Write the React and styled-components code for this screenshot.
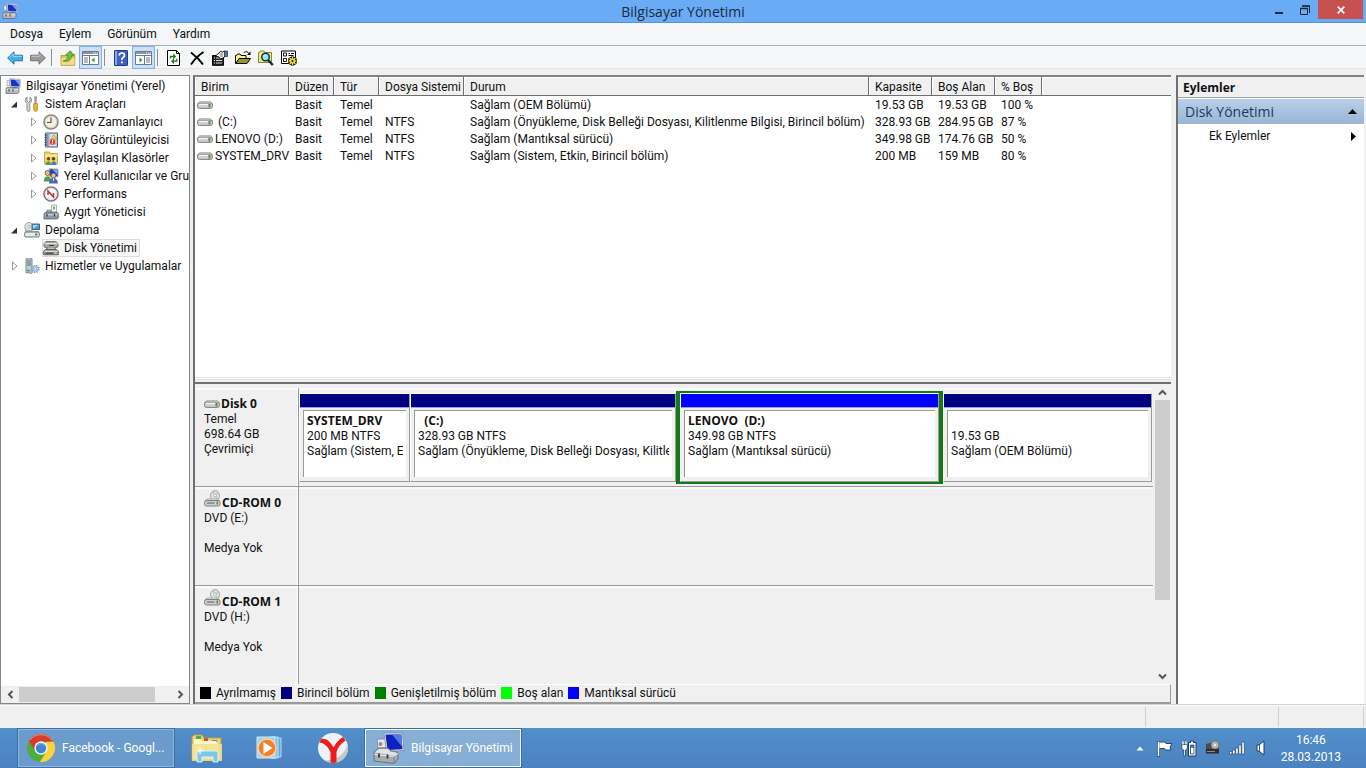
import React from "react"
import styled, { createGlobalStyle, css } from "styled-components"

const headingFont = `"Open Sans", "Noto Sans", sans-serif`

const GlobalStyle = createGlobalStyle`
  * {
    box-sizing: border-box;
  }
  body {
    margin: 0;
    font-family: Roboto, "Open Sans", sans-serif;
    font-size: 12px;
    line-height: 16px;
    color: #111;
    background: #f0f0f0;
  }
  button {
    font: inherit;
    color: inherit;
    border: 0;
    padding: 0;
    background: none;
  }
  svg {
    display: block;
    flex: none;
  }
`

const Desktop = styled.div`
  display: flex;
  flex-direction: column;
  height: 100vh;
  overflow: hidden;
`

/* ---------- title bar ---------- */

const TitleBar = styled.header`
  display: grid;
  grid-template-columns: 1fr auto 1fr;
  height: 23px;
  flex: none;
  background: #6aabf6;
  border-bottom: 1px solid #5a92cf;
`
const TitleIcon = styled.div`
  padding: 3px 0 0 2px;
`
const Title = styled.h1`
  margin: 0;
  font-family: ${headingFont};
  font-size: 14px;
  font-weight: 400;
  line-height: 23px;
  color: #1c2b3c;
`
const WindowButtons = styled.div`
  display: flex;
  justify-content: flex-end;
  align-items: flex-start;
  padding-right: 3px;
`
const WindowButton = styled.button`
  display: flex;
  align-items: center;
  justify-content: center;
  width: ${(p) => (p.$close ? "45px" : "26px")};
  height: 19px;
  color: ${(p) => (p.$close ? "#fff" : "#1c2b3c")};
  background: ${(p) => (p.$close ? "#c75050" : "transparent")};
`

/* ---------- menu and toolbar ---------- */

const MenuBar = styled.nav`
  display: flex;
  flex: none;
  gap: 16px;
  height: 23px;
  padding-left: 10px;
  background: #f4f6f8;
  border-bottom: 1px solid #adb0b3;
`
const MenuButton = styled.button`
  line-height: 22px;
`
const Toolbar = styled.div`
  display: flex;
  flex: none;
  height: 23px;
  padding-left: 3px;
  background: #f4f6f8;
  border-bottom: 1px solid #e4e6e8;
`
const ToolButton = styled.button`
  display: flex;
  align-items: center;
  justify-content: center;
  width: 23px;
  height: 23px;
  border: 1px solid ${(p) => (p.$on ? "#7cb3e8" : "transparent")};
  background: ${(p) => (p.$on ? "#c9e0f7" : "transparent")};
`
const ToolSeparator = styled.span`
  width: 1px;
  height: 17px;
  margin: 3px 4px 0 2px;
  background: #8d8f92;
`

/* ---------- work area ---------- */

const WorkArea = styled.main`
  display: flex;
  flex: 1;
  min-height: 0;
  gap: 3px;
  padding: 6px 2px 0 0;
`
const TreePane = styled.aside`
  display: flex;
  flex-direction: column;
  width: 190px;
  flex: none;
  background: #fff;
  border: 1px solid #828790;
`
const TreeBody = styled.ul`
  flex: 1;
  margin: 0;
  padding: 1px 0 0;
  list-style: none;
  overflow: hidden;
`
const TreeRow = styled.li`
  display: flex;
  align-items: center;
  height: 18px;
  padding-left: ${(p) => [3, 8, 27][p.$level]}px;
  white-space: nowrap;
`
const Twisty = styled.span`
  width: ${(p) => (p.$root ? "0" : "14px")};
  flex: none;
`
const TreeLabel = styled.span`
  display: flex;
  align-items: center;
  gap: 5px;
  height: 18px;
  padding-right: 2px;
  border: 1px solid transparent;
  ${(p) =>
    p.$selected &&
    css`
      background: #f6f6f6;
      border-color: #dcdcdc;
    `}
`
const HScroll = styled.div`
  display: flex;
  align-items: center;
  height: 17px;
  flex: none;
  background: #f0f0f0;
`
const VScroll = styled.div`
  display: flex;
  flex-direction: column;
  align-items: center;
  width: 17px;
  flex: none;
  padding-right: 1px;
  background: #f0f0f0;
`
const ScrollButton = styled.button`
  display: flex;
  align-items: center;
  justify-content: center;
  width: 18px;
  height: 16px;
  flex: none;
  color: #555;
`
const HThumb = styled.div`
  height: 15px;
  flex: 0 0 136px;
  margin-right: auto;
  background: #cdcdcd;
`
const VThumb = styled.div`
  width: 15px;
  flex: 0 0 200px;
  margin-bottom: auto;
  background: #cdcdcd;
`

const CenterPane = styled.section`
  display: flex;
  flex-direction: column;
  flex: 1;
  min-width: 0;
  margin-right: 2px;
  border: solid #6d6f73;
  border-width: 2px 0 0 2px;
  border-top-color: #828282;
`
const VolumePane = styled.div`
  flex: 1;
  min-height: 0;
  overflow: hidden;
  background: #fff;
`
const VolumeTable = styled.table`
  width: 100%;
  table-layout: fixed;
  border-collapse: separate;
  border-spacing: 0;
  white-space: nowrap;
`
const ColumnHead = styled.th`
  width: ${(p) => (p.$width ? p.$width + "px" : "auto")};
  height: 19px;
  padding: 1px 0 0 6px;
  font-weight: 400;
  text-align: left;
  background: #f0f0f0;
  border-bottom: 1px solid #6e6e6e;
  border-right: ${(p) => (p.$width ? "1px solid #6e6e6e" : "0")};
  box-shadow: inset 1px 1px #fff;
`
const VolumeCell = styled.td`
  height: 17px;
  padding: 1px 0 0 6px;
  line-height: 16px;
`
const VolumeName = styled.div`
  display: flex;
  align-items: center;
  gap: 2px;
  margin-left: -4px;
  white-space: pre;
`
const Splitter = styled.div`
  height: 7px;
  flex: none;
  background: #f0f0f0;
  border-top: 1px solid #e3e3e3;
  border-bottom: 2px solid #6f6f6f;
  box-shadow: inset 0 1px #fff, inset 0 2px #dedede;
`
const DiskPane = styled.div`
  display: flex;
  flex: 0 0 300px;
  overflow: hidden;
  background: #f0f0f0;
`
const DiskRows = styled.div`
  flex: 1;
  min-width: 0;
  padding-top: 4px;
`
const DiskRow = styled.div`
  display: flex;
  height: 99px;
  margin-right: 1px;
  border-bottom: 1px solid #9a9a9a;
  box-shadow: inset 0 2px #fafafa;
`
const DiskLabel = styled.div`
  width: 104px;
  flex: none;
  padding: 8px 0 0 9px;
  line-height: 15px;
  border-right: 1px solid #9a9a9a;
  box-shadow: inset -1px 0 #fff;
`
const DiskName = styled.div`
  display: flex;
  align-items: flex-end;
  gap: 1px;
  height: 15px;
  font-family: ${headingFont};
  font-weight: 700;
  svg {
    margin-bottom: 3px;
  }
`
const DiskLine = styled.div`
  height: 15px;
  padding-top: 1px;
`
const PartitionStrip = styled.div`
  display: grid;
  grid-template-columns: ${(p) => p.$columns};
  flex: 1;
  min-width: 0;
  height: 93px;
  margin: 3px 1px 0 0;
`
const PartitionFrame = styled.div`
  min-width: 0;
  border: solid ${(p) => (p.$selected ? "#137a18" : "transparent")};
  border-width: ${(p) => (p.$selected ? "2px 4px" : "2px 0")};
`
const Partition = styled.div`
  display: flex;
  flex-direction: column;
  height: 89px;
  border: 1px solid #fff;
  border-right-color: #9a9a9a;
  border-bottom-color: #9a9a9a;
`
const PartitionBar = styled.div`
  height: 14px;
  flex: none;
  background: ${(p) => p.$color};
  border-bottom: 1px solid #9c9ce0;
`
const PartitionInfo = styled.div`
  flex: 1;
  margin: 2px 3px 4px;
  padding: 2px 0 0 3px;
  line-height: 15px;
  white-space: pre;
  background: #fff;
  border: solid #9a9a9a;
  border-width: 1px 0 0 1px;
  overflow: hidden;
`
const PartitionText = styled.div`
  height: 15px;
  padding-top: 1px;
  margin-right: 3px;
  overflow: hidden;
  ${(p) =>
    p.$strong &&
    css`
      padding-top: 0;
      font-family: ${headingFont};
      font-weight: 700;
    `}
`
const Legend = styled.div`
  display: flex;
  align-items: center;
  gap: 5px;
  height: 20px;
  flex: none;
  padding: 0 0 2px 5px;
  border: solid #9a9a9a;
  border-width: 1px 1px 2px 0;
  border-top-color: #fff;
`
const LegendItem = styled.span`
  display: flex;
  align-items: center;
  gap: 5px;
  white-space: nowrap;
  &::before {
    content: "";
    width: 11px;
    height: 12px;
    background: ${(p) => p.$color};
  }
`

const ActionsPane = styled.aside`
  width: 188px;
  flex: none;
  background: #fff;
  border: solid #6d6f73;
  border-width: 2px 0 0 2px;
  border-top-color: #828282;
`
const ActionsTitle = styled.h2`
  margin: 0;
  height: 21px;
  padding-left: 5px;
  font-family: ${headingFont};
  font-size: 12px;
  line-height: 21px;
  background: #f0f0f0;
  border-bottom: 1px solid #a0a0a0;
`
const ActionsHeading = styled.button`
  display: flex;
  align-items: center;
  justify-content: space-between;
  width: 100%;
  height: 25px;
  margin-top: 1px;
  padding: 0 7px;
  font-family: ${headingFont};
  font-size: 14px;
  color: #1e395b;
  background: linear-gradient(#b9cfe8, #9bb5d4);
`
const ActionsItem = styled.button`
  display: flex;
  align-items: center;
  justify-content: space-between;
  width: 100%;
  height: 24px;
  padding: 0 8px 0 31px;
`

const StatusBar = styled.footer`
  display: flex;
  justify-content: flex-end;
  height: 24px;
  flex: none;
  padding: 2px 2px 1px 0;
  border-top: 1px solid #d4d4d4;
  box-shadow: inset 0 1px #f8f8f8;
`
const StatusCell = styled.span`
  width: ${(p) => p.$width}px;
  border-right: 1px solid #d0d0d0;
`

/* ---------- taskbar ---------- */

const Taskbar = styled.div`
  display: flex;
  align-items: center;
  height: 40px;
  flex: none;
  padding: 0 25px 0 17px;
  background: linear-gradient(#528fcb, #4a82bf);
  color: #fff;
`
const TaskButton = styled.button`
  display: flex;
  align-items: center;
  gap: 6px;
  width: 158px;
  height: 40px;
  padding-left: 8px;
  white-space: nowrap;
  border: 1px solid #3a6ea5;
  background: ${(p) => (p.$active ? "#87aed5" : "#6b9bcc")};
  box-shadow: inset 0 0 0 1px ${(p) => (p.$active ? "#f2f7fc" : "#8fb6dd")};
`
const TaskShortcut = styled.button`
  display: flex;
  align-items: center;
  justify-content: center;
  width: 63px;
  height: 40px;
`
const Tray = styled.div`
  display: flex;
  align-items: center;
  gap: 8px;
  margin-left: auto;
`
const Clock = styled.time`
  margin-left: 4px;
  padding-top: 2px;
  line-height: 17px;
  text-align: center;
`

/* ---------- icons ---------- */

const Svg = ({ w = 16, h = 16, box, children }) => (
  <svg width={w} height={h} viewBox={box || `0 0 ${w} ${h}`} aria-hidden="true">
    {children}
  </svg>
)

const ComputerIcon = () => (
  <Svg>
    <path d="M2 2.500h2.500v5H2z" fill="#eceeef" stroke="#8a8f94" strokeWidth=".6" />
    <path d="M4.500.5l10.800.8v8.200L5.500 9z" fill="#d9dfe5" stroke="#95a0ab" strokeWidth=".6" />
    <path d="M5.600 1.600l8.800.6v6.200L6.300 8z" fill="#1a30c4" />
    <path d="M10 1.900l4.400.3v5z" fill="#7f9cf0" />
    <path d="M1 10.300l1.500-1h9.500l2 1v4l-1.500 1.200H1z" fill="#b4babd" stroke="#5c6266" strokeWidth=".7" />
    <path d="M1.400 11.800h12" stroke="#eef0f1" strokeWidth=".8" />
    <path d="M4 11v2.500M8 11v2.500" stroke="#3a3f42" />
    <path d="M7.500 9h4v1.300h-4z" fill="#6d7479" />
  </Svg>
)

const ComputerLargeIcon = () => (
  <Svg w={32} h={32}>
    <path d="M4 8l2-1h7v9H5z" fill="#e7eaec" stroke="#7c8287" strokeWidth=".8" />
    <circle cx="7.500" cy="12" r="2" fill="#8c9296" />
    <path d="M11 1h18.500l1.500 17.500-17.500 1z" fill="#e3eaf0" stroke="#7f8c99" strokeWidth=".8" />
    <path d="M12.500 2.500h15.800l1.200 14.700-15 .8z" fill="#0e22c0" />
    <path d="M19 2.500h9.300l1 12.500z" fill="#5576e6" />
    <path d="M18 19.500l6-.3 1 3h-6z" fill="#868d92" />
    <path d="M1 20l5-4h9l3 3h3l4 2v6l-4 4.500L1 29z" fill="#a6acaf" stroke="#5d6366" strokeWidth=".8" />
    <path d="M1.500 20.500L6 17h9l3 3h3l3 1-3 2.500z" fill="#dfe3e5" />
    <path d="M1.500 22.500l19.500 1.800 4-3" fill="none" stroke="#f3f5f6" />
    <path d="M21 24.500v6.500" stroke="#7a8184" />
    <path d="M6 21.500v4M14.500 22.500v4" stroke="#33393c" strokeWidth="1.800" />
  </Svg>
)

const ToolsIcon = () => (
  <Svg>
    <path d="M3 1v4l1.500 1.500L6 5V1c2 1.200 2 5-.2 6.500V14c0 2-2.800 2-2.800 0V7.500C1 6 1 2.200 3 1z" fill="#d5d9dc" stroke="#70767b" strokeWidth=".8" />
    <path d="M10.500.8h2L12 7h-1z" fill="#a8adb1" stroke="#70767b" strokeWidth=".6" />
    <path d="M9.800 7.500h3.600v6c0 2.500-3.600 2.500-3.600 0z" fill="#f0b42c" stroke="#a87410" strokeWidth=".7" />
  </Svg>
)

const ClockIcon = () => (
  <Svg>
    <circle cx="8" cy="8" r="7" fill="#f6f1de" stroke="#85888b" strokeWidth="1.600" />
    <circle cx="8" cy="8" r="5.600" fill="none" stroke="#ddd3ae" />
    <path d="M8 3.500V8.500h-4" fill="none" stroke="#4a5866" strokeWidth="1.200" />
  </Svg>
)

const EventIcon = () => (
  <Svg>
    <path d="M2.500 1h12v14h-12z" fill="#b9c6da" stroke="#53688a" />
    <path d="M3 1.500h2.500v13H3z" fill="#8095b5" />
    <path d="M1.500 3h2M1.500 5.500h2M1.500 8h2M1.500 10.500h2M1.500 13h2" stroke="#444" strokeWidth=".8" />
    <path d="M7 3h6M7 5h6M7 13.500h6" stroke="#f4f7fb" />
    <path d="M11 2.500l2.700 4.500H8.300z" fill="#ffd93b" stroke="#a8821c" strokeWidth=".5" />
    <circle cx="9.500" cy="10" r="3.200" fill="#d9463a" stroke="#f5d4d0" strokeWidth=".5" />
    <path d="M9.500 8v2.500M9.500 11.300v.9" stroke="#fff" />
  </Svg>
)

const SharedIcon = () => (
  <Svg>
    <path d="M1.500 2h5l1 1.500h7V14h-13z" fill="#f4d265" stroke="#b78f27" strokeWidth=".7" />
    <path d="M2 5h12.500v1.500H2z" fill="#fdf0ad" />
    <circle cx="5.500" cy="8.800" r="1.700" fill="#6b4a2a" />
    <path d="M2.500 15c0-5 5.500-5 5.500 0z" fill="#4aa54f" />
    <circle cx="10.500" cy="8.800" r="1.700" fill="#54412e" />
    <path d="M8 15c0-5 5.500-5 5.500 0z" fill="#3f86cf" />
  </Svg>
)

const UsersIcon = () => (
  <Svg>
    <path d="M6 .8l9 .4v7.600L7 8.500z" fill="#1d3fbf" stroke="#a1a9b2" />
    <path d="M9.500 1.800l5 .3v4.400z" fill="#84a2ee" />
    <circle cx="4.500" cy="5" r="2.500" fill="#e8b98b" stroke="#6b4c2c" strokeWidth=".8" />
    <path d="M.8 13.500c0-7 7.700-7 7.700 0z" fill="#4e9d50" />
    <circle cx="10.500" cy="7.500" r="2.400" fill="#ecc394" stroke="#6b4c2c" strokeWidth=".8" />
    <path d="M6 15.500c0-7.500 9-7.500 9 0z" fill="#4b68b6" />
    <path d="M9.800 10.500l.7 3 .8-3z" fill="#fff" />
  </Svg>
)

const PerfIcon = () => (
  <Svg>
    <circle cx="8" cy="8" r="7" fill="#fff" stroke="#77797b" strokeWidth="1.600" />
    <circle cx="8" cy="8" r="5.400" fill="none" stroke="#dcdcdc" />
    <path d="M5 9V5l5.500 6V7" fill="none" stroke="#c22a30" strokeWidth="1.500" />
  </Svg>
)

const DeviceIcon = () => (
  <Svg>
    <path d="M8.500 1h5v8h-5z" fill="#f4f7f5" stroke="#899" strokeWidth=".7" />
    <path d="M10 2.500h2v3h-2z" fill="#67b56b" />
    <path d="M4 6h4v3H4z" fill="#bfc6cb" stroke="#697177" strokeWidth=".7" />
    <path d="M1 9.500L3 8h10.500l1.800 1.500V14L14 15H1z" fill="#8c98a3" stroke="#4d565e" strokeWidth=".7" />
    <path d="M1.500 10.800h13" stroke="#dbe2e7" />
    <path d="M4 10v2.500M11.500 10v2.500" stroke="#283038" strokeWidth="1.200" />
  </Svg>
)

const StorageIcon = () => (
  <Svg>
    <circle cx="5" cy="4.700" r="4.200" fill="#dfe6de" stroke="#858e88" strokeWidth=".8" />
    <circle cx="5" cy="4.700" r="1.300" fill="#fff" stroke="#858e88" strokeWidth=".6" />
    <path d="M8 2h7.500v5.500H8z" fill="#3a9fd5" stroke="#4c5f6c" />
    <path d="M9 3h5.500L9 6.500z" fill="#a6def7" />
    <path d="M1 8h7l1 1h6v1.500H1z" fill="#b4bbbe" />
    <rect x=".6" y="10" width="14.800" height="5" rx="1.500" fill="#e6e9ea" stroke="#5b6468" strokeWidth=".9" />
    <path d="M11 12.500h2.500" stroke="#32a32e" strokeWidth="2" />
  </Svg>
)

const DiskMgmtIcon = () => (
  <Svg>
    <path d="M3 1.500h9.500L15 3.500v3.200l-2 1H3l-2-1V3.500z" fill="#a5a5a1" stroke="#5e5e5b" strokeWidth=".8" />
    <path d="M1.500 3.700h13" stroke="#f0f0ee" />
    <path d="M6 5.400h5" stroke="#333" />
    <path d="M3 7.500h10v2H3z" fill="#8f8f8b" />
    <path d="M5 8.200h6" stroke="#e9e9e6" strokeWidth=".8" />
    <path d="M2.500 9.500h11L15.300 11v3.800H.7V11z" fill="#8f8f8b" stroke="#4e4e4b" strokeWidth=".8" />
    <path d="M1.300 11.300h13.500" stroke="#efefec" />
    <path d="M3 13.200h7" stroke="#3a3a38" />
    <path d="M12 13.200h1.500" stroke="#fff" />
  </Svg>
)

const ServicesIcon = () => (
  <Svg>
    <path d="M2 .8h6v14H2z" fill="#c3cdd5" stroke="#65717c" strokeWidth=".8" />
    <path d="M3 3h4M3 5h4M3 7h4" stroke="#5d6a76" />
    <path d="M3 12.500h2" stroke="#3aa447" strokeWidth="1.400" />
    <circle cx="11.500" cy="11" r="3.400" fill="none" stroke="#7da3c8" strokeWidth="1.600" strokeDasharray="1.500 1.170" />
    <circle cx="11.500" cy="11" r="2.700" fill="#b9d5ee" stroke="#7da3c8" strokeWidth=".7" />
    <circle cx="11.500" cy="11" r="1.100" fill="#fff" stroke="#7da3c8" strokeWidth=".5" />
    <circle cx="6.800" cy="13.800" r="1.700" fill="#9fc0df" stroke="#6d95bc" strokeWidth=".6" />
  </Svg>
)

const DriveIcon = () => (
  <Svg w={16} h={8}>
    <path d="M2.500.6h11L15.300 3H.7z" fill="#f4f4f4" stroke="#9a9a9a" strokeWidth=".7" />
    <rect x=".5" y="2" width="15" height="5.400" rx="2" fill="#cfcfcf" stroke="#757575" strokeWidth=".9" />
    <path d="M2 3.500h9" stroke="#f8f8f8" />
    <path d="M11.500 3h2v3.500h-2z" fill="#4b8f4b" />
  </Svg>
)

const CdDriveIcon = () => (
  <Svg w={17} h={17}>
    <ellipse cx="11" cy="5.700" rx="4.500" ry="5" fill="#e0e5e0" stroke="#8d938d" strokeWidth=".8" />
    <path d="M11 5.500L9 1M11 5.500l3.500-3M11 5.500l3 4" stroke="#8fb98f" strokeWidth=".8" />
    <circle cx="11" cy="5.500" r="1.400" fill="#fff" stroke="#8d938d" strokeWidth=".6" />
    <path d="M3 9h9.500l3 2H.8z" fill="#f1f1f1" stroke="#8a8a8a" strokeWidth=".7" />
    <rect x=".6" y="10.500" width="15.500" height="5.500" rx="2" fill="#cfcfcf" stroke="#757575" strokeWidth=".9" />
    <path d="M3 13h7.500" stroke="#5b5b5b" />
    <path d="M12.500 11.500h1.500v3h-1.500z" fill="#4b8f4b" />
  </Svg>
)

const BackIcon = () => (
  <Svg>
    <path d="M.6 8L7 1.800v3.400h8.400v5.600H7v3.400z" fill="#3fb0ea" stroke="#27699c" strokeWidth=".9" />
    <path d="M2.500 7.600L6.200 4v2.300h8.300" fill="none" stroke="#a4dff9" />
  </Svg>
)
const ForwardIcon = () => (
  <Svg>
    <path d="M15.400 8L9 1.800v3.400H.6v5.600H9v3.400z" fill="#9a9a9a" stroke="#6b6b6b" strokeWidth=".9" />
    <path d="M1.500 6.300h8.300V4" fill="none" stroke="#c9c9c9" />
  </Svg>
)
const UpFolderIcon = () => (
  <Svg>
    <path d="M1 5.500h5L7.500 4h7.300v11.300H1z" fill="#e9bd5b" stroke="#b88f35" strokeWidth=".8" />
    <path d="M1.500 8h13v6.800h-13z" fill="#f8d98c" />
    <path d="M3 11c3-.5 5-2.500 5-5.500L5.500 5 10.500.8 13.800 6l-2.300-.3C11.500 10 8 12.500 3 11z" fill="#62c441" stroke="#3a8d2a" strokeWidth=".7" />
  </Svg>
)
const PanelIcon = ({ flip }) => (
  <Svg w={17} h={14}>
    <path d="M.5.5h16v13H.5z" fill="#fff" stroke="#6e7887" />
    <path d="M1 2h15" stroke="#8b97a8" strokeWidth="2" />
    <path d="M11 2h1M13 2h1M15 2h1" stroke="#fff" />
    <path d="M1 4.500h15" stroke="#6e7887" />
    <g transform={flip ? "translate(17 0) scale(-1 1)" : undefined}>
      <path d="M7.500 5v8" stroke="#6e7887" />
      <path d="M2 7h4M2 9h4M2 11h4" stroke="#5876a5" />
      <path d="M12.500 6.500v5L9.500 9z" fill="#33a02c" />
    </g>
  </Svg>
)
const HelpIcon = () => (
  <Svg>
    <rect x="1.500" y=".5" width="13" height="15" rx=".5" fill="#3f5fc4" stroke="#22398c" />
    <path d="M2 1h2v14H2z" fill="#8ba3ea" />
    <path d="M6.200 5.500c0-3.300 5.300-3.300 5.300-.3 0 2.300-2.700 2.300-2.700 4.800" fill="none" stroke="#fff" strokeWidth="1.700" />
    <path d="M7.900 11.500h1.900v1.800H7.900z" fill="#fff" />
  </Svg>
)
const RefreshIcon = () => (
  <Svg>
    <path d="M1.500.5h9l3 3v12h-12z" fill="#fff" stroke="#000" />
    <path d="M10.500.5v3h3" fill="none" stroke="#000" />
    <path d="M4.500 8.500v-2H8" fill="none" stroke="#1a7a1a" strokeWidth="1.300" />
    <path d="M7.200 3.500v5.700l3-2.800z" fill="#1a7a1a" />
    <path d="M10.800 8.800v2.400H7.500" fill="none" stroke="#1a7a1a" strokeWidth="1.300" />
    <path d="M8 8.500v5.700l-3-2.900z" fill="#1a7a1a" />
  </Svg>
)
const DeleteIcon = () => (
  <Svg>
    <path d="M2 2.500c4 3 8.500 7 12 12M14.500 2C9 5.500 5 10 2 14.500" fill="none" stroke="#000" strokeWidth="1.900" />
  </Svg>
)
const PropsIcon = () => (
  <Svg>
    <path d="M.5 5.500h11v9.800H.5z" fill="#222" stroke="#000" />
    <path d="M2 8h1M4 8h6M2 10.500h1M4 10.500h6M2 13h1M4 13h6" stroke="#f0f0f0" strokeWidth=".9" />
    <path d="M3.500 6l5-4.500 2 .5L13 1v5.500L11 8 8.500 9 7 7z" fill="#f4f4f4" stroke="#000" strokeWidth=".9" />
    <path d="M7.500 4h3.500M8 6h3" stroke="#555" strokeWidth=".8" />
    <path d="M12.500 1h3v5.500h-3z" fill="#5c6fa8" stroke="#222" strokeWidth=".6" />
  </Svg>
)
const OpenIcon = () => (
  <Svg>
    <path d="M.5 13.500v-8h1l1-1.500H5l1 1.500h5v3" fill="#f7f08c" stroke="#000" />
    <path d="M.8 13.500L4 8.500h11.500L12 13.500z" fill="#9a9526" stroke="#000" />
    <path d="M8.500 3c1.500-1.800 4-1.800 5.500.5" fill="none" stroke="#000" />
    <path d="M15.500 1.500V5H12z" fill="#000" />
  </Svg>
)
const SearchIcon = () => (
  <Svg>
    <path d="M.5 12.500v-10h1l1-1.500H6l1 1.500h6.500v10z" fill="#f3e878" stroke="#8a8332" />
    <circle cx="7.500" cy="7" r="3.800" fill="#8ee5ee" stroke="#0a2b4e" strokeWidth="1.400" />
    <path d="M10 10l4.800 5" stroke="#0a2b4e" strokeWidth="2.400" />
    <path d="M6 6.500l2-2" stroke="#fff" />
  </Svg>
)
const SettingsIcon = () => (
  <Svg>
    <path d="M.5 1h14v12.500H.5z" fill="#fff" stroke="#000" />
    <path d="M2.500 3h3v3h-3zM2.500 8.500h3v3h-3z" fill="#fff" stroke="#000" strokeWidth=".9" />
    <path d="M7.500 3.500h1.500M10 3.500h3M7.500 5.500h5M7.500 8.500h2" stroke="#000" />
    <g stroke="#000" strokeWidth="3">
      <path d="M11.500 6.500v9M7 11h9M8.300 7.800l6.400 6.400M14.700 7.800l-6.400 6.400" />
    </g>
    <g stroke="#f5dc38" strokeWidth="1.400">
      <path d="M11.500 7v8M7.500 11h8M8.600 8.100l5.800 5.800M14.400 8.100l-5.800 5.800" />
    </g>
    <circle cx="11.500" cy="11" r="2.500" fill="#f5dc38" />
    <circle cx="11.500" cy="11" r="1" fill="#000" />
  </Svg>
)

const Chevron = ({ d }) => (
  <Svg w={9} h={9}>
    <path d={d} fill="none" stroke="currentColor" strokeWidth="2" />
  </Svg>
)

const ChromeIcon = () => (
  <Svg w={30} h={30}>
    <circle cx="15" cy="15" r="14" fill="#4caf3d" />
    <path d="M2.900 8A14 14 0 0 1 27.500 8.800H15L9 17.800z" fill="#db3b2c" />
    <path d="M27.400 8.500A14 14 0 0 1 13.800 29L20.800 18.200 19.500 9z" fill="#fcd13a" />
    <path d="M4 7a14 14 0 0 1 22 0" fill="none" stroke="#ef8d7c" />
    <circle cx="15" cy="15" r="6.700" fill="#f2f4f5" />
    <circle cx="15" cy="15" r="5.200" fill="#3e86d1" />
    <path d="M11 13a4.500 4.500 0 0 1 8 0" fill="none" stroke="#84b8ec" />
  </Svg>
)
const ExplorerIcon = () => (
  <Svg w={32} h={30}>
    <path d="M1 4l2-2h8l2 3h17v22H1z" fill="#ecd27a" stroke="#c29b3b" />
    <path d="M5 3h5v3H5z" fill="#4eae45" />
    <path d="M13 5h4v3h-4z" fill="#d0513e" />
    <path d="M21 7h5v3h-5z" fill="#4a8fd2" />
    <path d="M3 6h6l2 2h14l2 3v15H2z" fill="#fbf4c6" />
    <path d="M1 11h30v17H1z" fill="#f5e08c" opacity=".85" />
    <path d="M6 29V20q0-2 2-2h17q2 0 2 2v9h-5v-5H11v5z" fill="#7cc8e8" stroke="#d7f2fc" />
    <path d="M9 14v7M6 17.500h7" stroke="#fff" strokeWidth="1.500" opacity=".8" />
  </Svg>
)
const PlayerIcon = () => (
  <Svg w={28} h={26}>
    <path d="M18 3h7v19h-7z" fill="#5ba9de" stroke="#b5dcf3" />
    <path d="M14 2h8v21h-8z" fill="#7abbe6" stroke="#c7e6f7" />
    <path d="M1 2h18v21H1z" fill="#a5cfea" stroke="#d5ebf7" />
    <circle cx="11" cy="13" r="9" fill="#f0812a" stroke="#f7d4b0" strokeWidth="1.500" />
    <path d="M7.500 7v12l9-6z" fill="#fff" />
  </Svg>
)
const YandexIcon = () => (
  <Svg w={32} h={32}>
    <circle cx="16" cy="16" r="15" fill="#f0f1f2" />
    <path d="M16 31A15 15 0 0 0 30.500 12C28 22 22 27 8 28.500 10 30 13 31 16 31z" fill="#c6c9cc" />
    <path d="M4 7C9 6 13 9 16.500 15.500c2.500-5 6-8.500 9.500-10.500l2.500 3.500C24 11.500 20.500 15.500 19.500 20v10.500c-2 .6-4.500.6-6 0V20C10.500 14 7 11 2.300 10.500z" fill="#ee1c1c" />
  </Svg>
)

const ShowHiddenIcon = () => (
  <Svg w={16} h={5}>
    <path d="M8 .5L11.500 4.500h-7z" fill="#fff" />
  </Svg>
)
const FlagIcon = () => (
  <Svg w={17} h={17}>
    <path d="M2.500 1v15.500" stroke="#1c3c60" strokeWidth="3" />
    <path d="M3 2h6l1 1.500h6L14 7l1 3H9.500L8.500 8.500H3z" fill="#fff" stroke="#1c3c60" strokeWidth=".9" />
    <path d="M2.500 1.500V16" stroke="#fff" strokeWidth="1.600" />
  </Svg>
)
const PowerIcon = () => (
  <Svg w={16} h={17}>
    <path d="M7.500 2.500h2V1h3v1.500h2.500V16H7.500z" fill="#fff" stroke="#1c3c60" />
    <path d="M9.500 5h3.500v9H9.500z" fill="#4a82bf" stroke="#1c3c60" strokeWidth=".7" />
    <path d="M10 8h2.500v5.500H10z" fill="#fff" />
    <path d="M.8 4.500h5.500v4L4.500 10v6H2.700v-6L.8 8.500z" fill="#fff" stroke="#1c3c60" strokeWidth=".8" />
    <path d="M2 1.500v3M5 1.500v3" stroke="#fff" strokeWidth="1.300" />
  </Svg>
)
const EjectIcon = () => (
  <Svg w={16} h={16}>
    <path d="M1 4l8-2 5 3v5H1z" fill="#4c4c4c" />
    <circle cx="10" cy="5" r="4" fill="#b9b4ae" stroke="#6c6762" strokeWidth=".7" />
    <circle cx="10" cy="5" r="1.200" fill="#eee" />
    <path d="M1 9h12l1 1v3.500H1z" fill="#2e2e2e" />
    <path d="M2 11.500h8" stroke="#8c8c8c" />
  </Svg>
)
const SignalIcon = () => (
  <Svg w={16} h={14}>
    <path d="M.5 10.500h2.400V13H.5zM3.600 9H6v4H3.600zM6.700 7h2.400v6H6.700zM9.800 4h2.400v9H9.800zM12.900 1h2.400v12h-2.400z" fill="#fff" stroke="#1c3c60" strokeWidth=".6" />
  </Svg>
)
const VolumeIcon = () => (
  <Svg w={16} h={16}>
    <path d="M4 5h2l5-4v14l-5-4H4z" fill="#fff" stroke="#1c3c60" />
    <path d="M6.500 5v6" stroke="#1c3c60" strokeWidth=".8" />
  </Svg>
)

/* ---------- data ---------- */

const tools = [
  { name: "Geri", icon: <BackIcon /> },
  { name: "İleri", icon: <ForwardIcon /> },
  null,
  { name: "Bir düzey yukarı", icon: <UpFolderIcon /> },
  { name: "Konsol ağacını göster", icon: <PanelIcon />, on: true },
  null,
  { name: "Yardım", icon: <HelpIcon /> },
  { name: "Eylem bölmesini göster", icon: <PanelIcon flip />, on: true },
  null,
  { name: "Yenile", icon: <RefreshIcon /> },
  { name: "Sil", icon: <DeleteIcon /> },
  { name: "Özellikler", icon: <PropsIcon /> },
  { name: "Aç", icon: <OpenIcon /> },
  { name: "Bul", icon: <SearchIcon /> },
  { name: "Ayarlar", icon: <SettingsIcon /> },
]

const tree = [
  { level: 0, label: "Bilgisayar Yönetimi (Yerel)", icon: <ComputerIcon /> },
  { level: 1, label: "Sistem Araçları", icon: <ToolsIcon />, state: "open" },
  { level: 2, label: "Görev Zamanlayıcı", icon: <ClockIcon />, state: "closed" },
  { level: 2, label: "Olay Görüntüleyicisi", icon: <EventIcon />, state: "closed" },
  { level: 2, label: "Paylaşılan Klasörler", icon: <SharedIcon />, state: "closed" },
  { level: 2, label: "Yerel Kullanıcılar ve Gru", icon: <UsersIcon />, state: "closed" },
  { level: 2, label: "Performans", icon: <PerfIcon />, state: "closed" },
  { level: 2, label: "Aygıt Yöneticisi", icon: <DeviceIcon /> },
  { level: 1, label: "Depolama", icon: <StorageIcon />, state: "open" },
  { level: 2, label: "Disk Yönetimi", icon: <DiskMgmtIcon />, selected: true },
  { level: 1, label: "Hizmetler ve Uygulamalar", icon: <ServicesIcon />, state: "closed" },
]

const columns = [
  ["Birim", 94],
  ["Düzen", 45],
  ["Tür", 45],
  ["Dosya Sistemi", 85],
  ["Durum", 405],
  ["Kapasite", 63],
  ["Boş Alan", 63],
  ["% Boş", 47],
  ["", 0],
]

const volumes = [
  ["", "Basit", "Temel", "", "Sağlam (OEM Bölümü)", "19.53 GB", "19.53 GB", "100 %"],
  [" (C:)", "Basit", "Temel", "NTFS", "Sağlam (Önyükleme, Disk Belleği Dosyası, Kilitlenme Bilgisi, Birincil bölüm)", "328.93 GB", "284.95 GB", "87 %"],
  ["LENOVO (D:)", "Basit", "Temel", "NTFS", "Sağlam (Mantıksal sürücü)", "349.98 GB", "174.76 GB", "50 %"],
  ["SYSTEM_DRV", "Basit", "Temel", "NTFS", "Sağlam (Sistem, Etkin, Birincil bölüm)", "200 MB", "159 MB", "80 %"],
]

const partitions = [
  { share: 111, name: "SYSTEM_DRV", size: "200 MB NTFS", status: "Sağlam (Sistem, Et", color: "#000080" },
  { share: 266, name: "  (C:)", size: "328.93 GB NTFS", status: "Sağlam (Önyükleme, Disk Belleği Dosyası, Kilitle", color: "#000080" },
  { share: 267, name: "LENOVO  (D:)", size: "349.98 GB NTFS", status: "Sağlam (Mantıksal sürücü)", color: "#0000ff", selected: true },
  { share: 209, name: "", size: "19.53 GB", status: "Sağlam (OEM Bölümü)", color: "#000080" },
]

const disks = [
  { name: "Disk 0", icon: <DriveIcon />, lines: ["Temel", "698.64 GB", "Çevrimiçi"], partitions },
  { name: "CD-ROM 0", icon: <CdDriveIcon />, lines: ["DVD (E:)", "", "Medya Yok"] },
  { name: "CD-ROM 1", icon: <CdDriveIcon />, lines: ["DVD (H:)", "", "Medya Yok"] },
]

const legend = [
  ["Ayrılmamış", "#000"],
  ["Birincil bölüm", "#000080"],
  ["Genişletilmiş bölüm", "#008000"],
  ["Boş alan", "#00ff00"],
  ["Mantıksal sürücü", "#0000ff"],
]

const shares = (parts) => parts.map((p) => `minmax(0, ${p.share}fr)`).join(" ")

const TreeArrow = ({ state }) => (
  <Svg w={9} h={10}>
    {state === "open" && <path d="M8 2.500v6H2z" fill="#333" />}
    {state === "closed" && (
      <path d="M3.500 1v8L8 5z" fill="#fff" stroke="#9a9a9a" />
    )}
  </Svg>
)

export default function App() {
  return (
    <Desktop>
      <GlobalStyle />
      <TitleBar>
        <TitleIcon>
          <ComputerIcon />
        </TitleIcon>
        <Title>Bilgisayar Yönetimi</Title>
        <WindowButtons>
          <WindowButton aria-label="Simge durumuna küçült">
            <Svg w={10} h={10}>
              <path d="M1 7h8v2H1z" fill="currentColor" />
            </Svg>
          </WindowButton>
          <WindowButton aria-label="Önceki boyut">
            <Svg w={10} h={10}>
              <path d="M.5 3.500h7v6h-7zM2 1h7.500v7" fill="none" stroke="currentColor" />
              <path d="M0 3.500h8M2 1h8" stroke="currentColor" strokeWidth="1.500" />
            </Svg>
          </WindowButton>
          <WindowButton $close aria-label="Kapat">
            <Svg w={8} h={8}>
              <path d="M.7.7l6.600 6.600M7.300.7L.7 7.300" stroke="currentColor" strokeWidth="1.700" />
            </Svg>
          </WindowButton>
        </WindowButtons>
      </TitleBar>

      <MenuBar>
        {["Dosya", "Eylem", "Görünüm", "Yardım"].map((item) => (
          <MenuButton key={item}>{item}</MenuButton>
        ))}
      </MenuBar>

      <Toolbar>
        {tools.map((tool, i) =>
          tool ? (
            <ToolButton key={i} $on={tool.on} aria-label={tool.name}>
              {tool.icon}
            </ToolButton>
          ) : (
            <ToolSeparator key={i} />
          )
        )}
      </Toolbar>

      <WorkArea>
        <TreePane>
          <TreeBody>
            {tree.map((node) => (
              <TreeRow key={node.label} $level={node.level}>
                <Twisty $root={node.level === 0}>
                  {node.state && <TreeArrow state={node.state} />}
                </Twisty>
                <TreeLabel $selected={node.selected}>
                  {node.icon}
                  {node.label}
                </TreeLabel>
              </TreeRow>
            ))}
          </TreeBody>
          <HScroll>
            <ScrollButton aria-label="Sola kaydır">
              <Chevron d="M6.500 1L3 4.500 6.500 8" />
            </ScrollButton>
            <HThumb />
            <ScrollButton aria-label="Sağa kaydır">
              <Chevron d="M2.500 1L6 4.500 2.500 8" />
            </ScrollButton>
          </HScroll>
        </TreePane>

        <CenterPane>
          <VolumePane>
            <VolumeTable>
              <thead>
                <tr>
                  {columns.map(([label, width]) => (
                    <ColumnHead key={label} $width={width}>
                      {label}
                    </ColumnHead>
                  ))}
                </tr>
              </thead>
              <tbody>
                {volumes.map(([name, ...cells]) => (
                  <tr key={name}>
                    <VolumeCell>
                      <VolumeName>
                        <DriveIcon />
                        {name}
                      </VolumeName>
                    </VolumeCell>
                    {cells.map((cell, i) => (
                      <VolumeCell key={i}>{cell}</VolumeCell>
                    ))}
                  </tr>
                ))}
              </tbody>
            </VolumeTable>
          </VolumePane>
          <Splitter />
          <DiskPane>
            <DiskRows>
              {disks.map((disk) => (
                <DiskRow key={disk.name}>
                  <DiskLabel>
                    <DiskName>
                      {disk.icon}
                      {disk.name}
                    </DiskName>
                    {disk.lines.map((line, i) => (
                      <DiskLine key={i}>{line}</DiskLine>
                    ))}
                  </DiskLabel>
                  {disk.partitions && (
                    <PartitionStrip $columns={shares(disk.partitions)}>
                      {disk.partitions.map((part) => (
                        <PartitionFrame key={part.size} $selected={part.selected}>
                          <Partition>
                            <PartitionBar $color={part.color} />
                            <PartitionInfo>
                              <PartitionText $strong>{part.name}</PartitionText>
                              <PartitionText>{part.size}</PartitionText>
                              <PartitionText>{part.status}</PartitionText>
                            </PartitionInfo>
                          </Partition>
                        </PartitionFrame>
                      ))}
                    </PartitionStrip>
                  )}
                </DiskRow>
              ))}
            </DiskRows>
            <VScroll>
              <ScrollButton aria-label="Yukarı kaydır">
                <Chevron d="M1 6.500L4.500 3 8 6.500" />
              </ScrollButton>
              <VThumb />
              <ScrollButton aria-label="Aşağı kaydır">
                <Chevron d="M1 2.500L4.500 6 8 2.500" />
              </ScrollButton>
            </VScroll>
          </DiskPane>
          <Legend>
            {legend.map(([label, color]) => (
              <LegendItem key={label} $color={color}>
                {label}
              </LegendItem>
            ))}
          </Legend>
        </CenterPane>

        <ActionsPane>
          <ActionsTitle>Eylemler</ActionsTitle>
          <ActionsHeading>
            Disk Yönetimi
            <Svg w={9} h={5}>
              <path d="M4.500 0L9 5H0z" fill="#000" />
            </Svg>
          </ActionsHeading>
          <ActionsItem>
            Ek Eylemler
            <Svg w={5} h={9}>
              <path d="M0 0l5 4.500L0 9z" fill="#000" />
            </Svg>
          </ActionsItem>
        </ActionsPane>
      </WorkArea>

      <StatusBar>
        <StatusCell $width={133} />
        <StatusCell $width={133} />
        <StatusCell $width={85} />
      </StatusBar>

      <Taskbar>
        <TaskButton>
          <ChromeIcon />
          Facebook - Googl...
        </TaskButton>
        <TaskShortcut aria-label="Dosya Gezgini">
          <ExplorerIcon />
        </TaskShortcut>
        <TaskShortcut aria-label="Windows Media Player">
          <PlayerIcon />
        </TaskShortcut>
        <TaskShortcut aria-label="Yandex">
          <YandexIcon />
        </TaskShortcut>
        <TaskButton $active>
          <ComputerLargeIcon />
          Bilgisayar Yönetimi
        </TaskButton>
        <Tray>
          <ShowHiddenIcon />
          <FlagIcon />
          <PowerIcon />
          <EjectIcon />
          <SignalIcon />
          <VolumeIcon />
          <Clock>
            16:46
            <br />
            28.03.2013
          </Clock>
        </Tray>
      </Taskbar>
    </Desktop>
  )
}
